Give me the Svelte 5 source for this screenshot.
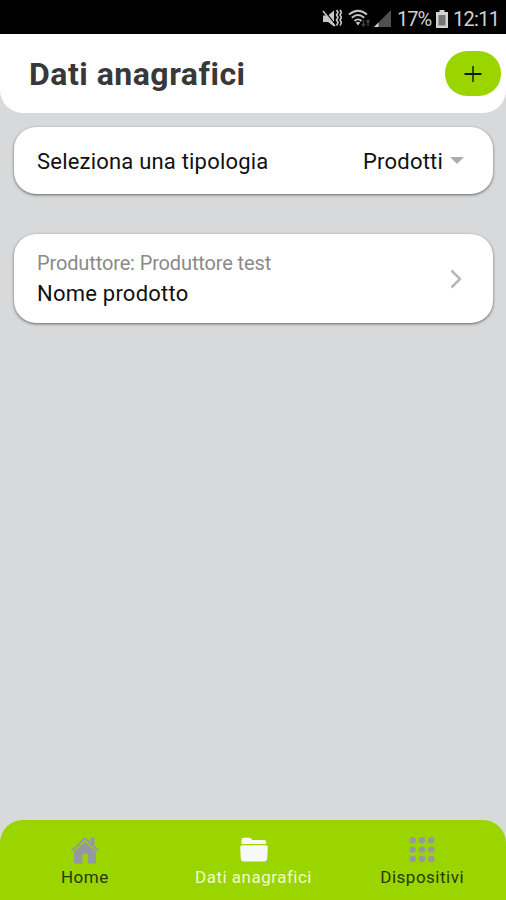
<script lang="ts">
	let category = $state('Prodotti');
	let active = $state('folder');

	const products = [
		{ producer: 'Produttore test', name: 'Nome prodotto' }
	];

	const tabs = [
		{ id: 'home', label: 'Home' },
		{ id: 'folder', label: 'Dati anagrafici' },
		{ id: 'devices', label: 'Dispositivi' }
	];

	const dots = [3.5, 12.8, 22.1];
</script>

<div class="screen">
	<div class="status-bar">
		<svg class="mute" width="20" height="20" viewBox="0 0 20 20">
			<path d="M1 6.500h5l6-5v16l-6-4.500H1z" fill="#c8c8c8" />
			<path d="M2 1.500l12 15" stroke="#000" stroke-width="1.500" />
			<path d="M1 2l12 15" stroke="#c8c8c8" stroke-width="1.500" />
			<path d="M14.500 1l1.500 2.500-1.500 2.500 1.500 2.500-1.500 2.500 1.500 2.500-1.500 3M18 1l1.500 2.500L18 6l1.500 2.500L18 11l1.500 2.500L18 16.500" fill="none" stroke="#c8c8c8" stroke-width="1.600" />
		</svg>
		<svg class="wifi" width="24" height="20" viewBox="0 0 24 20">
			<g fill="none" stroke="#c8c8c8" stroke-width="1.800">
				<path d="M1 5.500Q10-2 19 5.500" />
				<path d="M3.800 8.700Q10 3.300 16.200 8.700" />
				<path d="M6.500 12Q10 8.800 13.500 12" />
			</g>
			<path d="M7.800 13.500q2.200-1.600 4.400 0L10 16.500z" fill="#c8c8c8" />
			<path d="M15.500 11v6M13.800 15l1.700 2 1.700-2M20 17v-6M18.300 13l1.700-2 1.700 2" fill="none" stroke="#404040" stroke-width="1.400" />
		</svg>
		<svg class="signal" width="17" height="18" viewBox="0 0 17 18">
			<path d="M17 0v17H0z" fill="#505050" />
			<path d="M4.500 12.500V17H0z" fill="#d0d0d0" />
		</svg>
		<span class="percent">17%</span>
		<svg class="battery" width="12" height="18" viewBox="0 0 12 18">
			<path d="M3.500 0h5v2H12v16H0V2h3.500z" fill="#d2d2d2" />
			<path d="M2.500 5h7v10.500h-7z" fill="#747474" />
		</svg>
		<span class="time">12:11</span>
	</div>

	<header>
		<h1>Dati anagrafici</h1>
		<button class="add-btn" aria-label="Aggiungi">
			<svg width="18" height="18" viewBox="0 0 18 18">
				<path d="M9 1v16" stroke="#2b4100" stroke-width="1.800" />
				<path d="M.5 9h17" stroke="#101800" stroke-width="2" />
			</svg>
		</button>
	</header>

	<main>
		<div class="card filter">
			<span class="filter-label">Seleziona una tipologia</span>
			<button class="select">
				<span class="value">{category}</span>
				<svg width="14" height="7" viewBox="0 0 14 7"><path d="M0 0h14L7 7z" fill="#adadad" /></svg>
			</button>
		</div>

		{#each products as product}
		<div class="card product">
			<div class="info">
				<div class="producer">Produttore: {product.producer}</div>
				<div class="name">{product.name}</div>
			</div>
			<svg width="12" height="20" viewBox="0 0 12 20"><path d="M1.500 1.500L10 10l-8.500 8.500" fill="none" stroke="#b8b8b8" stroke-width="2.500" /></svg>
		</div>
		{/each}
	</main>

	<nav>
		{#each tabs as tab}
		<button class="tab {tab.id}" class:active={active === tab.id} onclick={() => active = tab.id}>
			<svg width="30" height="28" viewBox="0 0 30 28">
				{#if tab.id === 'home'}
				<path d="M2 14.500L15 2.500l13 12" fill="none" stroke="currentColor" stroke-width="2.200" />
				<path d="M20.500 1.500h4v8l-4-3.700z" fill="currentColor" />
				<path d="M4 15.500L15 5.700l11 9.800v12h-8.200v-9.800h-5.300v9.800H4z" fill="currentColor" />
				{:else if tab.id === 'folder'}
				<path d="M2.500 8V4q0-2.200 2.200-2.200h5.500q1.500 0 2.300 1.200l.7 1h12q2 0 2 2v2z" fill="currentColor" />
				<path d="M3.500 9.200h23q2.500 0 2.300 2.400l-.6 11q-.2 3-3.200 3H5q-3 0-3.200-3l-.6-11q-.2-2.400 2.300-2.400z" fill="currentColor" />
				{:else}
				{#each dots as cy}
				{#each dots as cx}
				<circle cx={cx + 2.2} cy={cy + 0.8} r="3.200" fill="currentColor" />
				{/each}
				{/each}
				{/if}
			</svg>
			<span>{tab.label}</span>
		</button>
		{/each}
	</nav>
</div>

<style>
	:global(body) { margin: 0; background: #d7d9db; }
	.screen { height: 900px; display: flex; flex-direction: column; background: #d7d9db; font-family: Roboto, sans-serif; color: #111; overflow: hidden; }
	button { font: inherit; color: inherit; background: none; border: none; padding: 0; cursor: pointer; }
	svg { display: block; flex-shrink: 0; }

	.status-bar { height: 34px; box-sizing: border-box; padding: 3px 7px 0 0; display: flex; align-items: center; justify-content: flex-end; background: #000; color: #d0d0d0; font-size: 20px; line-height: 30px; }
	.wifi { margin-left: 6px; }
	.signal { margin-left: 2px; }
	.percent { margin-left: 6px; width: 34px; letter-spacing: -1px; }
	.battery { margin-left: 5px; }
	.time { margin-left: 5px; width: 46px; letter-spacing: -0.7px; white-space: nowrap; }

	header { height: 79px; box-sizing: border-box; padding: 0 5px 0 29px; display: flex; align-items: center; justify-content: space-between; background: #fff; border-radius: 0 0 23px 23px; }
	h1 { margin: 0; font-size: 32px; font-weight: 700; line-height: 40px; letter-spacing: 0.5px; color: #383838; white-space: nowrap; }
	.add-btn { width: 56px; height: 45px; border-radius: 22px; background: #9bd500; display: flex; align-items: center; justify-content: center; }

	main { flex: 1; padding: 14px 13px 0 14px; display: flex; flex-direction: column; gap: 40px; }
	.card { box-sizing: border-box; display: flex; align-items: center; justify-content: space-between; background: #fff; border-radius: 22px; box-shadow: 0 1px 3px rgba(0,0,0,0.55); padding: 0 29px 0 23px; white-space: nowrap; }
	.filter { height: 67px; font-size: 22px; letter-spacing: 0.2px; }
	.filter-label, .value { padding-top: 2px; }
	.select { display: flex; align-items: center; gap: 7px; letter-spacing: 0.2px; }
	.product { height: 89px; padding-right: 31px; }
	.info { padding-top: 2px; }
	.producer { font-size: 20px; line-height: 28px; letter-spacing: -0.13px; color: #8a8a8a; }
	.name { font-size: 22px; line-height: 33px; letter-spacing: 0.23px; }

	nav { height: 80px; display: flex; background: #9bd500; border-radius: 23px 23px 0 0; }
	.tab { flex: 1; padding: 16px 0 0 1px; display: flex; flex-direction: column; align-items: center; justify-content: flex-start; }
	.tab svg { color: #9598a0; }
	.tab span { margin-top: 3px; font-size: 17px; line-height: 21px; letter-spacing: 0.5px; color: #263b00; white-space: nowrap; }
	.tab.active svg { color: #f7f9f8; }
	.tab.active span { color: #eefbc9; }
</style>
